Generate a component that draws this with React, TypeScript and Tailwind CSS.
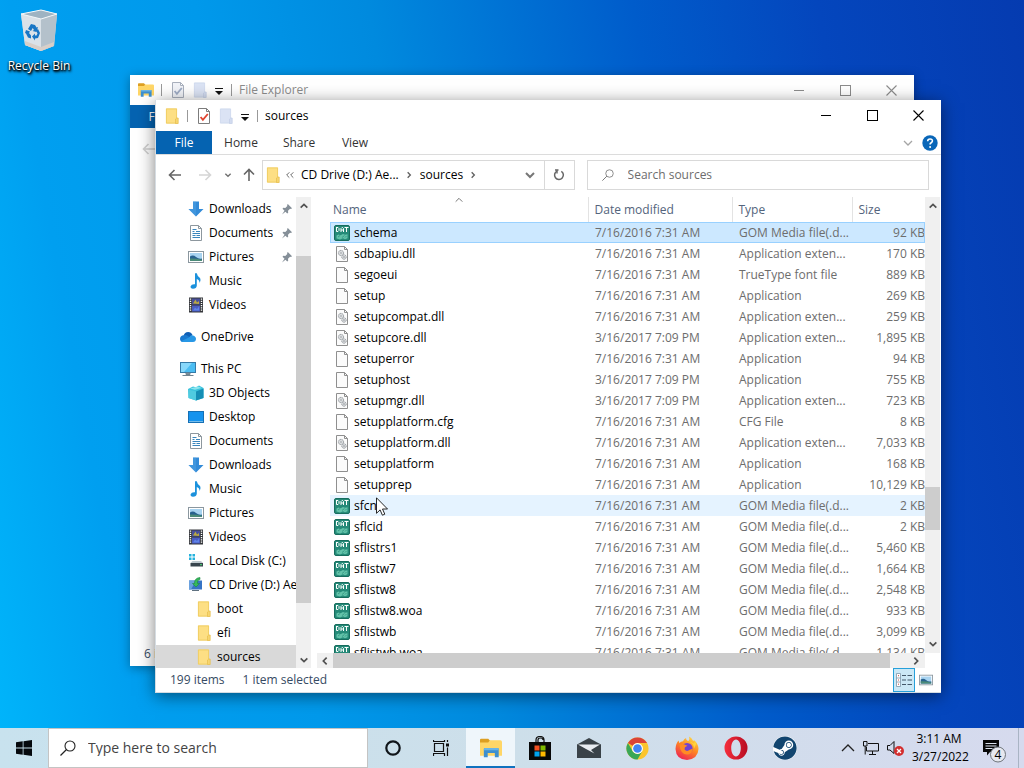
import React from "react";
import { FaSteam } from "react-icons/fa";

type IconProps = { className?: string };

/* ---------- file and folder icons ---------- */

const Folder = ({ className = "size-4" }: IconProps) => (
  <svg viewBox="0 0 16 16" className={className} aria-hidden="true">
    <path d="M2 .5h11v10.5l1 .5v4H2z" fill="#fbe08a" />
    <path d="M2.4 .9h10.2v14.2H2.4z" fill="#fddf84" stroke="#edc95c" strokeWidth=".8" />
    <path d="M11.5 15.5V11l1.2-1h1.5v5.5z" fill="#f6d571" stroke="#e6bd4c" strokeWidth=".7" />
  </svg>
);

const FadedFolder = () => (
  <svg viewBox="0 0 16 16" className="size-4" aria-hidden="true">
    <path d="M2.4 .9h10.2v14.2H2.4z" fill="#dbe3f4" stroke="#ccd6ec" strokeWidth=".8" />
    <path d="M11.5 15.5V11l1.2-1h1.5v5.5z" fill="#d3dcf0" stroke="#c3cee6" strokeWidth=".7" />
  </svg>
);

const CheckDoc = ({ muted = false }: { muted?: boolean }) => (
  <svg viewBox="0 0 16 16" className="size-4" aria-hidden="true">
    <path
      d="M2.5 .5h8l3 3v12h-11z M10.5 .5v3h3"
      fill={muted ? "#f1f3f8" : "#fff"}
      stroke={muted ? "#a9b0bd" : "#7c7c7c"}
    />
    <path
      d="m4.6 9 2.3 2.8L11.8 6"
      fill="none"
      stroke={muted ? "#9eabc4" : "#e0442f"}
      strokeWidth="1.8"
    />
  </svg>
);

const ExplorerIcon = ({ className = "size-4" }: IconProps) => (
  <svg viewBox="0 0 20 18" className={className} aria-hidden="true">
    <path d="M0 1.5Q0 .5 1 .5h6.5l1.6 1.8V5H0z" fill="#dd9f22" />
    <path d="M9 2h9.5q1.5 0 1.500 1.500V16H0V4h7.500z" fill="#ffd667" />
    <path d="M3.500 17.500V10q0-1 1-1h11.500q1 0 1 1v7.500h-3.500v-4h-6.500v4z" fill="#3d8fcf" />
    <path d="M3.500 11V10q0-1 1-1h11.500q1 0 1 1v1z" fill="#69b4e6" />
  </svg>
);

const PageIcon = () => (
  <svg viewBox="0 0 16 16" className="size-4" aria-hidden="true">
    <path d="M2.500 .5h8l3 3v12h-11z" fill="#fbfbfb" stroke="#8f8f8f" />
    <path d="M10.500 .5v3h3" fill="none" stroke="#8f8f8f" />
  </svg>
);

const DllIcon = () => (
  <svg viewBox="0 0 16 16" className="size-4" aria-hidden="true">
    <path d="M2.500 .5h8l3 3v12h-11z" fill="#fbfbfb" stroke="#8f8f8f" />
    <path d="M10.500 .5v3h3" fill="none" stroke="#8f8f8f" />
    <circle cx="7" cy="7" r="2.600" fill="#e4e6e8" stroke="#8b9095" strokeDasharray="1.300 .5" />
    <circle cx="7" cy="7" r=".9" fill="#fff" stroke="#8b9095" strokeWidth=".6" />
    <circle cx="10" cy="11" r="2.200" fill="#e4e6e8" stroke="#8b9095" strokeDasharray="1.200 .5" />
    <circle cx="10" cy="11" r=".7" fill="#fff" stroke="#8b9095" strokeWidth=".6" />
  </svg>
);

const DatIcon = () => (
  <svg viewBox="0 0 16 16" className="size-4" aria-hidden="true">
    <rect x=".5" y=".5" width="15" height="15" rx="1.500" fill="#258a78" stroke="#176d5e" />
    <g stroke="#fff" strokeWidth="1" fill="none">
      <path d="M2.500 2.500v4H4l1-1v-2l-1-1H2" />
      <path d="M7 7V3.500l1-1h.5l1 1V7M7 5h2.500" />
      <path d="M10.500 2.500h4M12.500 2.500V7" />
    </g>
    <path
      d="M2.500 13.500v-3l2-1 2 .8L9 9l2 .8 2.500-.6v4l-2.500 1-2-1-3 1.200z"
      fill="#62c2a9"
    />
    <path d="m4 12 2-1.500M8 12.500l2.500-2M11 12.500l1.500-1.500" stroke="#2d927e" strokeWidth=".8" />
  </svg>
);

/* ---------- navigation icons ---------- */

const DownloadsIcon = () => (
  <svg viewBox="0 0 16 16" className="size-4" aria-hidden="true">
    <path d="M5 .5h6V8h4.500L8 15.500.5 8H5z" fill="#338bd8" />
    <path d="M5 .5h3v15L.5 8H5z" fill="#57a7e6" opacity=".4" />
  </svg>
);

const DocumentsIcon = () => (
  <svg viewBox="0 0 16 16" className="size-4" aria-hidden="true">
    <path d="M2.500 .5h8l3 3v12h-11z" fill="#fff" stroke="#8d979e" />
    <path d="M10.500 .5v3h3" fill="none" stroke="#8d979e" />
    <path
      d="M4.500 4.500h4M4.500 6.500h2M8 6.500h4M4.500 8.500h7.500M4.500 10.500h3M8.500 10.500h3.500M4.500 12.500h7.500"
      stroke="#3a86bd"
    />
  </svg>
);

const PicturesIcon = ({ className = "size-4" }: IconProps) => (
  <svg viewBox="0 0 16 16" className={className} aria-hidden="true">
    <rect x=".5" y="2.500" width="15" height="11" fill="#fff" stroke="#8b979f" />
    <path d="M2 4h12v8H2z" fill="#a8d3f0" />
    <path d="M2 7.500q3-2 6 .5t6 1.500V12H2z" fill="#28618e" />
    <path d="M2 9.500q5-.5 12 1.300V12H2z" fill="#4b8b78" />
  </svg>
);

const MusicIcon = () => (
  <svg viewBox="0 0 16 16" className="size-4" aria-hidden="true">
    <path d="M7 .3h1.800q.4 2.500 2.700 4.200Q13.500 6.500 11.500 10q.3-2.800-2.700-4v6.800Q8.500 15.600 5 15.700q-2.800-.2-2.400-2.500Q3.500 10.800 7 11.200z" fill="#1b91dc" />
  </svg>
);

const VideosIcon = () => (
  <svg viewBox="0 0 16 16" className="size-4" aria-hidden="true">
    <path d="M1 .5h14v15H1z" fill="#35373b" />
    <path d="M4 1.500h8v6H4z" fill="#484f9b" />
    <path d="M4 8.500h8v6H4z" fill="#4b5cc4" />
    <path d="M5 6.500l2.500-4 1.500 3 2-1.500v3z" fill="#b9a842" />
    <path d="M5 13.500l2-3 2 1.500 2-2.500v4z" fill="#5d82e8" />
    <path d="M2.500 1.500v13M13.500 1.500v13" stroke="#fff" strokeWidth="1.400" strokeDasharray="1.200 1" />
  </svg>
);

const OneDriveIcon = () => (
  <svg viewBox="0 0 16 16" className="size-4" aria-hidden="true">
    <path d="M3.500 7Q4.500 3 8.200 3q3 0 4.300 3L8 10z" fill="#0f5fb5" />
    <path d="M3.800 6.300Q6 5.700 7.600 6.800L12 10 3 13Q0 12.700 0 9.700q.3-3 3.800-3.400z" fill="#1a7ad0" />
    <path d="M9 8.500Q10.500 5.800 13 6.500 16 7.500 16 10q-.2 3-3 3H3q-1 0-2-.8z" fill="#2898e6" />
  </svg>
);

const ThisPcIcon = () => (
  <svg viewBox="0 0 16 16" className="size-4" aria-hidden="true">
    <rect x=".5" y="1.500" width="15" height="10" fill="#4bbdf2" stroke="#357aa7" />
    <path d="M1 2h11L4 11H1z" fill="#87d8fb" />
    <path d="M6 12h4v1.500H6zM2.500 14.500h11" fill="#899aa6" stroke="#71838f" />
  </svg>
);

const ObjectsIcon = () => (
  <svg viewBox="0 0 16 16" className="size-4" aria-hidden="true">
    <path d="m0 4 5-2.500 3 .8L11 .5 15.500 3v10L8 15.500.5 13z" fill="#3bc3dd" />
    <path d="M.5 4.500 8 6.500v9L.5 13z" fill="#4fcbe0" />
    <path d="m8 6.500 7.500-3v9.500L8 15.500z" fill="#158eb5" />
    <path d="m2 3.500 5 1.200L13.500 3 10 1.500z" fill="#8be5ee" />
  </svg>
);

const DesktopIcon = () => (
  <svg viewBox="0 0 16 16" className="size-4" aria-hidden="true">
    <rect x=".5" y="2.500" width="15" height="11" fill="#1593ee" stroke="#1670b5" />
    <path d="M1 12.500h14" stroke="#76bdea" />
  </svg>
);

const DiskIcon = () => (
  <svg viewBox="0 0 16 16" className="size-4" aria-hidden="true">
    <path d="M1 1h2.500v2.500H1zM4.500 1H7v2.500H4.500zM1 4.500h2.500V7H1zM4.500 4.500H7V7H4.500z" fill="#24b2dd" />
    <path d="m2.500 10 2-2H13l2 2z" fill="#bfc9ce" />
    <path d="M2.500 10H15v3.500H2.500z" fill="#38454d" />
    <path d="M12 11.700h2" stroke="#52e27c" />
  </svg>
);

const CdIcon = () => (
  <svg viewBox="0 0 16 16" className="size-4" aria-hidden="true">
    <path d="M1 3.500h13v9H1z" fill="#3774c5" />
    <path d="M1 3.500h7l-5 9H1z" fill="#6ba2df" />
    <path d="M4 13.500h7" stroke="#5f7180" />
    <path d="M12 .5v2q-2.500 0-2.500 2.500v1.500h2L8 10 4.500 6.500h2Q6.300 1 12 .5z" fill="#37b95b" stroke="#1d8843" strokeWidth=".6" />
  </svg>
);

const PinIcon = () => (
  <svg viewBox="0 0 12 12" className="size-3" aria-hidden="true">
    <path d="m6.800 1 4.200 4.200-1 .7-1-.2-2 2.100.2 2-1 .7L4.500 8.800 1 11.500l2.500-3.700L1.500 5.700l.8-.9 2 .2 2-2.100-.2-1z" fill="#858f98" />
  </svg>
);

/* ---------- chevrons, arrows ---------- */

type Direction = "up" | "down" | "left" | "right";
const chevrons: Record<Direction, string> = {
  up: "M2 8l4-4 4 4",
  down: "M2 4l4 4 4-4",
  left: "M8 2L4 6l4 4",
  right: "M4 2l4 4-4 4",
};

const Chevron = ({
  dir,
  className = "size-3 text-[#505050]",
  weight = 2,
}: {
  dir: Direction;
  className?: string;
  weight?: number;
}) => (
  <svg viewBox="0 0 12 12" className={className} aria-hidden="true">
    <path d={chevrons[dir]} fill="none" stroke="currentColor" strokeWidth={weight} />
  </svg>
);

const Arrow = ({ className = "" }: IconProps) => (
  <svg viewBox="0 0 14 14" className={`size-[14px] ${className}`} aria-hidden="true">
    <path d="M13 7H1.500M6.500 2l-5 5 5 5" fill="none" stroke="currentColor" strokeWidth="1.600" />
  </svg>
);

const Magnifier = ({ className = "" }: IconProps) => (
  <svg viewBox="0 0 16 16" className={className} aria-hidden="true">
    <circle cx="10" cy="6" r="5" fill="none" stroke="currentColor" strokeWidth="1.100" />
    <path d="M6.500 9.500.5 15.500" stroke="currentColor" strokeWidth="1.300" />
  </svg>
);

const DropCaret = () => (
  <svg viewBox="0 0 8 8" className="size-2" aria-hidden="true">
    <path d="M0 1.500h8" stroke="#111" />
    <path d="M0 4h8L4 8z" fill="#111" />
  </svg>
);

/* ---------- window chrome ---------- */

const TitleBar = ({
  title,
  icon,
  muted = false,
}: {
  title: string;
  icon: React.ReactNode;
  muted?: boolean;
}) => (
  <header
    className={`flex shrink-0 items-center pl-2 ${muted ? "h-[30px] text-[#8c8c8c]" : "h-[31px] text-black"}`}
  >
    {icon}
    <span className="ml-[7px] h-3 w-px bg-[#999]" />
    <button aria-label="Properties" className="ml-2">
      <CheckDoc muted={muted} />
    </button>
    <button aria-label="New folder" className="ml-1.5">
      <FadedFolder />
    </button>
    <button aria-label="Customize toolbar" className="ml-[7px] flex h-5 items-center pt-0.5">
      <DropCaret />
    </button>
    <span className="ml-2 h-3 w-px bg-[#999]" />
    <h1 className="ml-[7px] flex-1">{title}</h1>
    <div className="flex self-stretch">
      <button aria-label="Minimize" className="grid w-[46px] place-items-center">
        <span className="h-px w-2.5 bg-current" />
      </button>
      <button aria-label="Maximize" className="grid w-[46px] place-items-center">
        <span className="size-[11px] border border-current" />
      </button>
      <button aria-label="Close" className="grid w-[46px] place-items-center">
        <svg viewBox="0 0 11 11" className="size-[11px]" aria-hidden="true">
          <path d="m.5.5 10 10m0-10-10 10" stroke="currentColor" strokeWidth="1.100" />
        </svg>
      </button>
    </div>
  </header>
);

const Ribbon = () => (
  <nav className="flex h-6 shrink-0 items-stretch border-b border-[#dcdcdc] text-[#333]">
    <button className="w-14 bg-[#0563b1] text-white">File</button>
    <button className="w-[58px]">Home</button>
    <button className="w-[58px]">Share</button>
    <button className="w-[54px]">View</button>
    <div className="flex-1" />
    <button aria-label="Expand the ribbon" className="mr-2">
      <Chevron dir="down" className="size-3 text-[#a5a5a5]" weight={1.3} />
    </button>
    <button aria-label="Help" className="mr-[3px] self-center">
      <svg viewBox="0 0 16 16" className="size-4" aria-hidden="true">
        <circle cx="8" cy="8" r="7.700" fill="#0966b8" />
        <path d="M5.700 6.200Q5.700 4 8.100 4t2.300 2q0 1-1.200 1.700T8.100 9.500" fill="none" stroke="#fff" strokeWidth="1.600" />
        <circle cx="8.100" cy="12" r="1" fill="#fff" />
      </svg>
    </button>
  </nav>
);

const AddressRow = () => (
  <div className="flex h-10 shrink-0 items-center pl-3 pr-3 text-black">
    <button aria-label="Back" className="text-[#666]">
      <Arrow />
    </button>
    <button aria-label="Forward" className="ml-4 text-[#d5d5d5]">
      <Arrow className="rotate-180" />
    </button>
    <button aria-label="Recent locations" className="ml-3">
      <Chevron dir="down" className="size-2 text-[#707070]" />
    </button>
    <button aria-label="Up" className="ml-2.5 text-[#666]">
      <Arrow className="rotate-90" />
    </button>
    <div className="ml-1.5 flex h-[30px] min-w-0 flex-[312] items-stretch border border-[#d9d9d9]">
      <div className="flex min-w-0 flex-1 items-center pl-0.5">
        <Folder />
        <span className="ml-[3px] flex text-[#606060]">
          <Chevron dir="left" className="size-2" weight={1.4} />
          <Chevron dir="left" className="-ml-1 size-2" weight={1.4} />
        </span>
        <a href="#drive" className="ml-[5px] whitespace-nowrap">CD Drive (D:) Ae...</a>
        <Chevron dir="right" className="ml-1.5 size-2 text-[#606060]" />
        <a href="#sources" className="ml-[7px]">sources</a>
        <Chevron dir="right" className="ml-1.5 size-2 text-[#606060]" />
      </div>
      <button aria-label="Previous locations" className="px-2">
        <Chevron dir="down" className="size-3 text-[#777]" />
      </button>
      <button aria-label="Refresh" className="w-[30px] border-l border-[#d9d9d9]">
        <svg viewBox="0 0 12 12" className="mx-auto size-3" aria-hidden="true">
          <path d="M8.300 2.300A4.400 4.400 0 1 1 4 2.100" fill="none" stroke="#666" strokeWidth="1.500" />
          <path d="M4 .5v4M2 1h3.500" stroke="#666" strokeWidth="1.400" />
        </svg>
      </button>
    </div>
    <label className="ml-3 flex h-[30px] min-w-0 flex-[342] items-center border border-[#d9d9d9]">
      <Magnifier className="ml-3.5 size-3 text-[#777]" />
      <input
        type="text"
        aria-label="Search sources"
        placeholder="Search sources"
        className="ml-3.5 min-w-0 flex-1 bg-transparent outline-none placeholder:text-[#6d6d6d]"
      />
    </label>
  </div>
);

/* ---------- navigation pane ---------- */

type NavItem = {
  label: string;
  icon: React.ReactNode;
  level: 0 | 1 | 2;
  pinned?: boolean;
  selected?: boolean;
  spaced?: boolean;
};

const navItems: NavItem[] = [
  { label: "Downloads", icon: <DownloadsIcon />, level: 1, pinned: true },
  { label: "Documents", icon: <DocumentsIcon />, level: 1, pinned: true },
  { label: "Pictures", icon: <PicturesIcon />, level: 1, pinned: true },
  { label: "Music", icon: <MusicIcon />, level: 1 },
  { label: "Videos", icon: <VideosIcon />, level: 1 },
  { label: "OneDrive", icon: <OneDriveIcon />, level: 0, spaced: true },
  { label: "This PC", icon: <ThisPcIcon />, level: 0, spaced: true },
  { label: "3D Objects", icon: <ObjectsIcon />, level: 1 },
  { label: "Desktop", icon: <DesktopIcon />, level: 1 },
  { label: "Documents", icon: <DocumentsIcon />, level: 1 },
  { label: "Downloads", icon: <DownloadsIcon />, level: 1 },
  { label: "Music", icon: <MusicIcon />, level: 1 },
  { label: "Pictures", icon: <PicturesIcon />, level: 1 },
  { label: "Videos", icon: <VideosIcon />, level: 1 },
  { label: "Local Disk (C:)", icon: <DiskIcon />, level: 1 },
  { label: "CD Drive (D:) Ae", icon: <CdIcon />, level: 1 },
  { label: "boot", icon: <Folder />, level: 2 },
  { label: "efi", icon: <Folder />, level: 2 },
  { label: "sources", icon: <Folder />, level: 2, selected: true },
];

const indents = ["pl-6", "pl-8", "pl-10"];

const NavPane = () => (
  <nav className="flex w-[155px] shrink-0" aria-label="Folders">
    <ul className="min-w-0 flex-1 overflow-hidden">
      {navItems.map((item, i) => (
        <li key={i} className={item.spaced ? "mt-2" : ""}>
          <a
            href="#folder"
            className={`flex h-6 items-center whitespace-nowrap text-black ${indents[item.level]} ${
              item.selected ? "bg-[#d9d9d9]" : ""
            }`}
          >
            <span className="shrink-0">{item.icon}</span>
            <span className="ml-[5px] flex-1">{item.label}</span>
            {item.pinned && (
              <span className="mr-[3px]">
                <PinIcon />
              </span>
            )}
          </a>
        </li>
      ))}
    </ul>
    <div className="flex w-[15px] flex-col items-center bg-[#f0f0f0]">
      <button aria-label="Scroll folders up" className="grid h-[18px] place-items-center">
        <Chevron dir="up" className="size-2.5 text-[#505050]" />
      </button>
      <div className="flex-[41]" />
      <div className="w-full flex-[348] bg-[#cdcdcd]" />
      <div className="flex-[49]" />
      <button aria-label="Scroll folders down" className="grid h-4 place-items-center">
        <Chevron dir="down" className="size-2.5 text-[#505050]" />
      </button>
    </div>
  </nav>
);

/* ---------- file list ---------- */

type Kind = "dat" | "dll" | "page";
type FileRow = [name: string, kind: Kind, date: string, type: string, size: string];

const july = "7/16/2016 7:31 AM";
const march = "3/16/2017 7:09 PM";
const gom = "GOM Media file(.d...";
const ext = "Application exten...";

const files: FileRow[] = [
  ["schema", "dat", july, gom, "92 KB"],
  ["sdbapiu.dll", "dll", july, ext, "170 KB"],
  ["segoeui", "page", july, "TrueType font file", "889 KB"],
  ["setup", "page", july, "Application", "269 KB"],
  ["setupcompat.dll", "dll", july, ext, "259 KB"],
  ["setupcore.dll", "dll", march, ext, "1,895 KB"],
  ["setuperror", "page", july, "Application", "94 KB"],
  ["setuphost", "page", march, "Application", "755 KB"],
  ["setupmgr.dll", "dll", march, ext, "723 KB"],
  ["setupplatform.cfg", "page", july, "CFG File", "8 KB"],
  ["setupplatform.dll", "dll", july, ext, "7,033 KB"],
  ["setupplatform", "page", july, "Application", "168 KB"],
  ["setupprep", "page", july, "Application", "10,129 KB"],
  ["sfcn", "dat", july, gom, "2 KB"],
  ["sflcid", "dat", july, gom, "2 KB"],
  ["sflistrs1", "dat", july, gom, "5,460 KB"],
  ["sflistw7", "dat", july, gom, "1,664 KB"],
  ["sflistw8", "dat", july, gom, "2,548 KB"],
  ["sflistw8.woa", "dat", july, gom, "933 KB"],
  ["sflistwb", "dat", july, gom, "3,099 KB"],
  ["sflistwb.woa", "dat", july, gom, "1,134 KB"],
];

const kindIcons: Record<Kind, React.ReactNode> = {
  dat: <DatIcon />,
  dll: <DllIcon />,
  page: <PageIcon />,
};

const rowColor = (name: string) =>
  name === "schema"
    ? "bg-[#cce8ff] outline outline-1 -outline-offset-1 outline-[#99d1ff]"
    : name === "sfcn"
      ? "bg-[#e5f3ff]"
      : "";

const FileList = () => (
  <section className="ml-1.5 flex min-w-0 flex-1 flex-col">
    <div className="mr-px flex min-h-0 flex-1">
      <div className="ml-[13px] min-h-0 min-w-0 flex-1 overflow-hidden">
        <table className="w-full table-fixed border-collapse whitespace-nowrap text-[#6d6d6d]">
          <colgroup>
            <col />
            <col className="w-36" />
            <col className="w-[120px]" />
            <col className="w-[73px]" />
          </colgroup>
          <thead>
            <tr className="h-[25px] text-left text-[#53647c]">
              <th className="relative p-0 pl-[3px] font-normal">
                Name
                <Chevron dir="up" className="absolute -top-0.5 left-1/2 size-2.5 -translate-x-1/2 text-[#777]" weight={1.2} />
              </th>
              <th className="border-l border-[#e3e3e3] p-0 pl-1.5 font-normal">Date modified</th>
              <th className="border-l border-[#e3e3e3] p-0 pl-1.5 font-normal">Type</th>
              <th className="border-l border-[#e3e3e3] p-0 pl-1.5 font-normal">Size</th>
            </tr>
          </thead>
          <tbody>
            {files.map(([name, kind, date, type, size]) => (
              <tr key={name} className={`h-[21px] ${rowColor(name)}`}>
                <td className="p-0 pl-1 text-black">
                  <span className="flex items-center gap-1">
                    {kindIcons[kind]}
                    {name}
                  </span>
                </td>
                <td className="p-0 pl-[7px]">{date}</td>
                <td className="p-0 pl-[7px]">{type}</td>
                <td className="p-0 text-right">{size}</td>
              </tr>
            ))}
          </tbody>
        </table>
      </div>
      <div className="flex w-[15px] flex-col items-center bg-[#f0f0f0]">
        <button aria-label="Scroll files up" className="grid h-[18px] place-items-center">
          <Chevron dir="up" className="size-2.5 text-[#505050]" />
        </button>
        <div className="flex-[272]" />
        <div className="w-full flex-[43] bg-[#cdcdcd]" />
        <div className="flex-[105]" />
        <button aria-label="Scroll files down" className="grid h-[18px] place-items-center">
          <Chevron dir="down" className="size-2.5 text-[#505050]" />
        </button>
      </div>
    </div>
    <div className="mr-4 flex h-[15px] shrink-0 items-center bg-[#f0f0f0]">
      <button aria-label="Scroll files left" className="grid w-4 place-items-center">
        <Chevron dir="left" className="size-2.5 text-[#505050]" />
      </button>
      <div className="h-full flex-[556] bg-[#cdcdcd]" />
      <div className="flex-[17]" />
      <button aria-label="Scroll files right" className="grid w-[18px] place-items-center">
        <Chevron dir="right" className="size-2.5 text-[#505050]" />
      </button>
    </div>
  </section>
);

const StatusBar = () => (
  <footer className="flex h-6 shrink-0 items-center gap-[18px] pl-3.5 pr-1 text-[#364a63]">
    <span>199 items</span>
    <span className="flex-1">1 item selected</span>
    <div className="flex items-center">
      <button aria-label="Details view" className="grid h-6 w-[22px] place-items-center border border-[#26a0da] bg-[#cbe8f6]">
        <svg viewBox="0 0 16 14" className="h-3.5 w-4" aria-hidden="true">
          <path d="M.5 .5h4v13h-4zM.5 5h4M.5 9h4" fill="#fff" stroke="#7f98ab" strokeWidth=".8" />
          <path d="M2 2.700h1M2 7h1M2 11.200h1" stroke="#c84b3b" />
          <path d="M6 2.500h4M11.500 2.500H16M6 7h4M11.500 7H16M6 11.500h4M11.500 11.500H16" stroke="#43586a" />
        </svg>
      </button>
      <button aria-label="Large icons view" className="grid h-6 w-[22px] place-items-center">
        <PicturesIcon className="size-3.5" />
      </button>
    </div>
  </footer>
);

/* ---------- desktop ---------- */

const RecycleBin = () => (
  <a
    href="#bin"
    className="flex w-[78px] flex-col items-center pt-2 text-white [text-shadow:0_1px_2px_#000,1px_1px_2px_#000,1px_2px_3px_#000]"
  >
    <svg viewBox="0 0 38 44" className="h-11 w-[38px]" aria-hidden="true">
      <path d="M1 6 22 2l15 4-3 32-13 5-16-6z" fill="#d3dae0" />
      <path d="m1 6 20 5v32L5 37z" fill="#dbe2e8" />
      <path d="m21 11 16-5-3 32-13 5z" fill="#b4c1cb" />
      <path d="M1 6 21 2l16 4-16 5z" fill="#9eb3c2" stroke="#f3f7f9" />
      <path d="m5 33 16 6 13-5-.4 4L21 43 5 37z" fill="#d8cfc9" />
      <g fill="#1976c5">
        <path d="m8 21 3-5 4 1 1.500 2.500 1.500-.5-1.500 5-4-1 1.500-1-1.300-2-1.700 3z" />
        <path d="m18 21 2 4-2 5-3 .5v2l-3-4 3-3v2h1.500l1-2-1.500-3z" />
        <path d="m6 22 4 1.500-1 1.500 2 2.500v3l-3-1-2-4-1-.5z" />
      </g>
    </svg>
    <span className="mt-1.5">Recycle Bin</span>
  </a>
);

const BackWindow = () => (
  <section
    aria-label="File Explorer"
    className="absolute bottom-[62px] left-[130px] right-[110px] top-[75px] flex flex-col bg-white shadow-[0_2px_10px_rgba(0,0,0,0.35)]"
  >
    <TitleBar title="File Explorer" icon={<ExplorerIcon />} muted />
    <div className="flex h-[23px] shrink-0">
      <button className="w-14 bg-[#0563b1] text-white">File</button>
    </div>
    <div className="flex flex-1 items-start pl-3 pt-3.5 text-[#d0d0d0]">
      <Arrow />
    </div>
    <footer className="flex h-6 items-center pl-3.5 text-[#364a63]">6 items</footer>
  </section>
);

const FrontWindow = () => (
  <section
    aria-label="sources"
    className="absolute bottom-[35px] left-[155px] right-[83px] top-[100px] flex flex-col border-b border-l border-[#d5dce2] bg-white shadow-[0_3px_16px_rgba(0,0,0,0.5)]"
  >
    <TitleBar title="sources" icon={<Folder />} />
    <Ribbon />
    <AddressRow />
    <div className="flex min-h-0 flex-1 pt-0.5">
      <NavPane />
      <FileList />
    </div>
    <StatusBar />
  </section>
);

const Pointer = () => (
  <svg viewBox="0 0 12 19" className="absolute left-[376px] top-[497px] h-[19px] w-3" aria-hidden="true">
    <path d="M.5 .8v15.500l3.600-3.400 2.300 5.300 2.400-1-2.300-5.200h5z" fill="#fff" stroke="#111" strokeWidth=".9" />
  </svg>
);

/* ---------- taskbar ---------- */

const StoreIcon = () => (
  <svg viewBox="0 0 24 24" className="size-6" aria-hidden="true">
    <path d="M8 7V4q0-3.500 4-3.500T16 4v3M10 7V4q0-2 2.500-2T15 4" fill="none" stroke="#111" strokeWidth="1.200" />
    <path d="M1 6h22v18H1z" fill="#080808" />
    <path d="M6.500 9.500h5v5h-5z" fill="#f25022" />
    <path d="M12.500 9.500h5v5h-5z" fill="#7fba00" />
    <path d="M6.500 15.500h5v5h-5z" fill="#00a4ef" />
    <path d="M12.500 15.500h5v5h-5z" fill="#ffb900" />
  </svg>
);

const MailIcon = () => (
  <svg viewBox="0 0 24 22" className="h-[22px] w-6" aria-hidden="true">
    <path d="M0 7.500 12 1l12 6.500V21H0z" fill="#3a4248" />
    <path d="M1 7.500h22l-9 5.500 3.500 3.500L9 12z" fill="#e9edf1" />
  </svg>
);

const ChromeIcon = () => (
  <svg viewBox="0 0 24 24" className="size-[23px]" aria-hidden="true">
    <circle cx="12" cy="12" r="11.500" fill="#fbc52d" />
    <path d="M2 6.250A11.500 11.500 0 0 1 22 6.250H12A5.750 5.750 0 0 0 7 9z" fill="#db4437" />
    <path d="M2 6.250A11.500 11.500 0 0 0 12 23.500L17 14.900A5.750 5.750 0 0 1 7 14.900z" fill="#3aa757" />
    <path d="M12 6.250h10L22 6.300l-5 8.600z" fill="#fbc52d" />
    <circle cx="12" cy="12" r="5.700" fill="#fff" />
    <circle cx="12" cy="12" r="4.500" fill="#4285f4" />
  </svg>
);

const FirefoxIcon = () => (
  <svg viewBox="0 0 24 24" className="size-6" aria-hidden="true">
    <defs>
      <linearGradient id="foxFlame" x1=".8" y1="0" x2=".25" y2="1">
        <stop offset="0" stopColor="#ffe14a" />
        <stop offset=".45" stopColor="#ff8a22" />
        <stop offset="1" stopColor="#ed2054" />
      </linearGradient>
    </defs>
    <path
      d="M3.500 4.500 4.300 7Q6 5.500 8 5.300 9 3 11 2q-.2 2 2 3 2-.5 1-4.500 2.500 1 4 4.200l1.500-.2Q23.500 8.500 23.500 13q-.5 10-11.500 11Q1 23.500.5 13 .7 7.500 3.500 4.500z"
      fill="url(#foxFlame)"
    />
    <circle cx="12" cy="12.500" r="5.600" fill="#7243d0" />
    <path d="M4.500 9q3-2 6 0l2 .7-2.500 1.600-.5 2q2 3 5.500.5l2.800-1.300Q17 18.500 12 18.500 5.500 18.500 4.500 9z" fill="#ff8b24" />
    <path d="M14 5.500q5 2 5 7l2.500-5-2-3q.5 3-1 3-2-2-4.500-2z" fill="#ffd43b" />
  </svg>
);

const OperaIcon = () => (
  <svg viewBox="0 0 24 24" className="size-6" aria-hidden="true">
    <defs>
      <linearGradient id="operaRed" x2="1">
        <stop stopColor="#f52e3d" />
        <stop offset="1" stopColor="#b80d21" />
      </linearGradient>
    </defs>
    <path
      fillRule="evenodd"
      d="M12 .5a11.500 11.500 0 1 0 0 23 11.500 11.500 0 1 0 0-23zm0 3c2.700 0 4.800 3.700 4.800 8.500s-2.100 8.500-4.800 8.500S7.200 16.800 7.200 12 9.300 3.500 12 3.500z"
      fill="url(#operaRed)"
    />
  </svg>
);

const SteamIcon = () => (
  <span className="grid size-6 place-items-center rounded-full bg-white">
    <FaSteam className="size-6 text-[#12456f]" />
  </span>
);

const CortanaIcon = () => (
  <svg viewBox="0 0 16 16" className="size-4" aria-hidden="true">
    <circle cx="8" cy="8" r="6.700" fill="none" stroke="#10151a" strokeWidth="2.200" />
  </svg>
);

const TaskViewIcon = () => (
  <svg viewBox="0 0 17 16" className="h-4 w-[17px]" aria-hidden="true">
    <path d="M1.500 3.500h9v8h-9zM.5 0v1.500h11V0M.5 16v-2.500h11V16M14.500 0v2M14.500 7.500V16" fill="none" stroke="#111" strokeWidth="1.200" />
    <path d="M13 3.500h3v3h-3z" fill="#111" />
  </svg>
);

const apps = [
  { label: "Cortana", icon: <CortanaIcon /> },
  { label: "Task View", icon: <TaskViewIcon /> },
  { label: "File Explorer", icon: <ExplorerIcon className="h-5 w-[22px]" />, active: true },
  { label: "Microsoft Store", icon: <StoreIcon /> },
  { label: "Mail", icon: <MailIcon /> },
  { label: "Chrome", icon: <ChromeIcon /> },
  { label: "Firefox", icon: <FirefoxIcon /> },
  { label: "Opera", icon: <OperaIcon /> },
  { label: "Steam", icon: <SteamIcon /> },
];

const Taskbar = () => (
  <footer className="flex h-10 shrink-0 items-stretch bg-linear-to-r from-[#c8e2ee] via-[#cddfea] to-[#d6daee] text-black">
    <button aria-label="Start" className="grid w-12 place-items-center">
      <svg viewBox="0 0 16 16" className="size-4" aria-hidden="true">
        <path d="M0 2.300 6.700 1.300v6.300H0zM7.500 1.200 16 0v7.600H7.500zM0 8.400h6.700v6.300L0 13.700zM7.500 8.400H16V16l-8.500-1.200z" fill="#05090d" />
      </svg>
    </button>
    <label className="flex w-80 items-center border border-[#c4c4c4] bg-white">
      <Magnifier className="ml-[11px] size-4 text-[#222]" />
      <input
        type="text"
        aria-label="Type here to search"
        placeholder="Type here to search"
        className="ml-3 min-w-0 flex-1 bg-transparent text-[14px] outline-none placeholder:text-[#444]"
      />
    </label>
    {apps.map(({ label, icon, active }) => (
      <button
        key={label}
        aria-label={label}
        className={`grid w-[49px] shrink-0 place-items-center ${
          active ? "border-b-2 border-[#0f72bf] bg-[#eff6fb] pt-0.5" : ""
        }`}
      >
        {icon}
      </button>
    ))}
    <div className="flex-1" />
    <button aria-label="Show hidden icons" className="mr-2">
      <svg viewBox="0 0 14 14" className="size-3.5" aria-hidden="true">
        <path d="m1 10 6-6 6 6" fill="none" stroke="#222" strokeWidth="1.300" />
      </svg>
    </button>
    <button aria-label="Network" className="mr-2">
      <svg viewBox="0 0 16 14" className="h-3.5 w-4" aria-hidden="true">
        <path d="M5 2.500h10.500v7.500h-12V6M.5 .5H4V5H.5zM2.200 5v8.500M9.500 10v3M6 13.500h7" fill="none" stroke="#111" />
      </svg>
    </button>
    <button aria-label="Sound muted" className="mr-2">
      <svg viewBox="0 0 17 16" className="h-4 w-[17px]" aria-hidden="true">
        <path d="M.5 5.500h2.500l4-4v12l-4-3.500H.5z" fill="none" stroke="#111" />
        <circle cx="12" cy="11" r="5" fill="#d32f2f" />
        <path d="m10 9 4 4m0-4-4 4" stroke="#fff" strokeWidth="1.300" />
      </svg>
    </button>
    <button className="w-[54px] text-center leading-[18px]">
      <span className="block whitespace-nowrap">3:11 AM</span>
      <span className="block whitespace-nowrap">3/27/2022</span>
    </button>
    <button aria-label="4 notifications" className="relative ml-4 mr-2.5 pt-1">
      <svg viewBox="0 0 26 26" className="size-[26px]" aria-hidden="true">
        <path d="M1 3h16v12H8l-3 3.500V15H1z" fill="#080808" />
        <path d="M3.500 6.500h11M3.500 9h11M3.500 11.500h7" stroke="#dbe2ed" />
        <circle cx="16" cy="17.500" r="7.500" fill="#e6e8ef" stroke="#6f757b" />
      </svg>
      <span className="absolute left-3 top-[19px] w-2 text-center">4</span>
    </button>
    <button aria-label="Show desktop" className="w-1.5 border-l border-[#a9b4c4]" />
  </footer>
);

export default function App() {
  return (
    <div className="flex h-screen flex-col overflow-hidden font-['Open_Sans','Noto_Sans',sans-serif] text-[12px] leading-4">
      <main className="relative min-h-0 flex-1 bg-[linear-gradient(80deg,#00b4fa_0%,#009ff0_12%,#0099eb_28%,#008ade_43%,#005ccb_66%,#0446bd_82%,#053bb0_100%)]">
        <RecycleBin />
        <BackWindow />
        <FrontWindow />
        <Pointer />
      </main>
      <Taskbar />
    </div>
  );
}
